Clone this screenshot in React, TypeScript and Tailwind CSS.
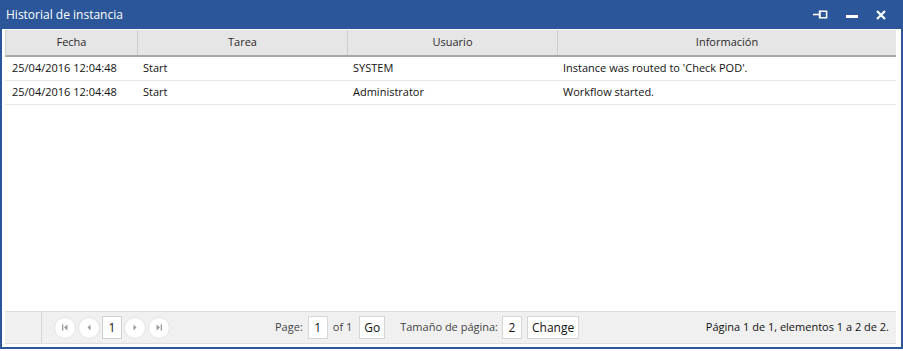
import React from "react";

const rows = [
  { fecha: "25/04/2016 12:04:48", tarea: "Start", usuario: "SYSTEM", info: "Instance was routed to 'Check POD'." },
  { fecha: "25/04/2016 12:04:48", tarea: "Start", usuario: "Administrator", info: "Workflow started." },
];

const cols = "grid grid-cols-[131px_210px_210px_1fr]";

function NavButton({ kind }: { kind: "first" | "prev" | "next" | "last" }) {
  return (
    <button className="w-[22px] h-[22px] rounded-full bg-white border border-[#e3e3e3] flex items-center justify-center">
      <svg width="8" height="7" viewBox="0 0 8 7" fill="#9a9a9a">
        {kind === "first" && (
          <>
            <rect x="1" y="0.5" width="1.3" height="6" />
            <path d="M6.5 0.5v6L3 3.5z" />
          </>
        )}
        {kind === "prev" && <path d="M5.5 0.5v6L2.5 3.5z" />}
        {kind === "next" && <path d="M2.5 0.5v6L5.5 3.5z" />}
        {kind === "last" && (
          <>
            <path d="M1.5 0.5v6L5 3.5z" />
            <rect x="5.7" y="0.5" width="1.3" height="6" />
          </>
        )}
      </svg>
    </button>
  );
}

export default function App() {
  return (
    <div className="w-[903px] h-[351px] bg-white font-['Open_Sans',sans-serif] text-[11px] text-[#111]">
      <div className="h-[349px] flex flex-col">
        {/* title bar */}
        <div className="h-[29px] bg-[#2b579a] flex items-center justify-between pl-[6px] pr-[17px] text-white">
          <span className="text-[12px] leading-none">Historial de instancia</span>
          <div className="flex items-center gap-[18px]">
            <svg width="15" height="9" viewBox="0 0 15 9" fill="none" stroke="white">
              <path d="M0 4.5h6" strokeWidth="1.6" />
              <path d="M6.8 0.5v8" strokeWidth="2" />
              <path d="M7 1.2h6.6v6.6H7" strokeWidth="1.5" />
            </svg>
            <svg width="12" height="9" viewBox="0 0 12 9">
              <rect x="0" y="5" width="12" height="3" fill="white" />
            </svg>
            <svg width="10" height="10" viewBox="0 0 10 10" stroke="white" strokeWidth="2.2">
              <path d="M1 1l8 8M9 1l-8 8" />
            </svg>
          </div>
        </div>

        {/* body */}
        <div className="flex-1 flex flex-col border-x-2 border-b-2 border-[#2b579a] pl-[3px] pr-[5px] pt-[1px] pb-[3px]">
          <div className="flex-1 flex flex-col">
            <div className={`${cols} h-[27px] bg-[#e6e6e6] border-l border-[#cfcfcf] border-b-2 border-b-[#a8a8a8] text-[#2a2a2a]`}>
              {["Fecha", "Tarea", "Usuario", "Información"].map((h, i) => (
                <div
                  key={h}
                  className={`flex items-center justify-center ${i > 0 ? "border-l border-[#cdcdcd]" : ""}`}
                >
                  {h}
                </div>
              ))}
            </div>
            {rows.map((r, i) => (
              <div key={i} className={`${cols} h-[24px] border-b border-[#e8e8e8] items-center`}>
                <div className="pl-[7px]">{r.fecha}</div>
                <div className="pl-[7px]">{r.tarea}</div>
                <div className="pl-[7px]">{r.usuario}</div>
                <div className="pl-[7px]">{r.info}</div>
              </div>
            ))}
          </div>

          {/* footer */}
          <div className="h-[33px] bg-[#f0f0f0] border-y border-[#dedede] flex items-center">
            <div className="w-[37px] h-full border-r border-[#d6d6d6]" />
            <div className="flex items-center gap-[2px] ml-[12px]">
              <NavButton kind="first" />
              <NavButton kind="prev" />
              <div className="w-[20px] h-[23px] bg-white border border-[#cfcfcf] flex items-center justify-center text-[12px]">1</div>
              <NavButton kind="next" />
              <NavButton kind="last" />
            </div>
            <div className="flex items-center ml-[105px] text-[#444]">
              <span>Page:</span>
              <div className="ml-[5px] w-[20px] h-[23px] bg-white border border-[#d6d6d6] flex items-center justify-center text-[12px] text-[#111]">1</div>
              <span className="ml-[5px]">of 1</span>
              <div className="ml-[7px] px-[4px] h-[23px] bg-white border border-[#d6d6d6] flex items-center text-[12px] text-[#111]">Go</div>
              <span className="ml-[15px]">Tamaño de página:</span>
              <div className="ml-[4px] w-[20px] h-[23px] bg-white border border-[#d6d6d6] flex items-center justify-center text-[12px] text-[#111]">2</div>
              <div className="ml-[5px] px-[4px] h-[23px] bg-white border border-[#d6d6d6] flex items-center text-[12px] text-[#111]">Change</div>
            </div>
            <span className="ml-auto mr-[7px] text-[#111]">Página 1 de 1, elementos 1 a 2 de 2.</span>
          </div>
        </div>
      </div>
    </div>
  );
}
